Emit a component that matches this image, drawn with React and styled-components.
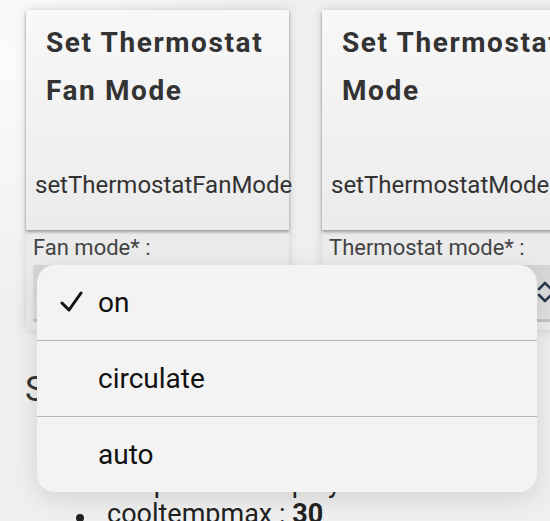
import React from 'react';
import styled, { createGlobalStyle } from 'styled-components';

const GlobalStyle = createGlobalStyle`
  body, html {
    margin: 0;
    padding: 0;
    width: 100%;
    height: 100%;
    overflow: hidden;
    background: #efefef;
    font-family: Roboto, "Liberation Sans", sans-serif;
  }
`;

const Page = styled.div`
  position: relative;
  width: 550px;
  height: 521px;
  overflow: hidden;
  background: radial-gradient(circle at 0 60px, #fbfbfb 0, #efefef 260px);
  padding: 10px 0 0 26px;
  box-sizing: border-box;
`;

const Columns = styled.div`
  display: flex;
  gap: 33px;
`;

const Column = styled.div`
  flex-shrink: 0;
  width: 263px;
  background: #ebebeb;
  box-shadow: 0 0 10px rgba(0, 0, 0, 0.13);
`;

const HeaderCard = styled.div`
  height: 220px;
  box-sizing: border-box;
  display: flex;
  flex-direction: column;
  padding: 9px 0 31px 0;
  background: linear-gradient(#f8f8f8, #ebebeb);
  box-shadow: 0 2px 3px rgba(0, 0, 0, 0.35);
  position: relative;
`;

const Title = styled.h3`
  margin: 0;
  padding-left: 20px;
  font-size: 28px;
  line-height: 48px;
  font-weight: 700;
  letter-spacing: 1.6px;
  color: #333;
  white-space: nowrap;
`;

const Command = styled.div`
  margin-top: auto;
  padding-left: 9px;
  font-size: 24px;
  color: #333;
  white-space: nowrap;
`;

const Form = styled.div`
  padding: 5px 0 8px 7px;
`;

const Label = styled.div`
  font-size: 22px;
  line-height: 26px;
  color: #444;
  margin-bottom: 4px;
  white-space: nowrap;
`;

const Select = styled.div`
  height: 57px;
  box-sizing: border-box;
  margin-right: 7px;
  background: linear-gradient(#d6d6d6, #e2e2e2);
  border-bottom: 3px solid #c4c4c4;
  display: flex;
  align-items: center;
  justify-content: flex-end;
  padding-right: 25px;
  border-radius: 3px;
`;

const Heading = styled.h2`
  margin: 39px 0 26px -1px;
  font-size: 35px;
  line-height: 42px;
  font-weight: 400;
  color: #333;
`;

const List = styled.ul`
  margin: 0;
  padding-left: 81px;
  list-style: none;
  font-size: 27px;
  line-height: 31px;
  color: #222;
`;

const Item = styled.li`
  position: relative;
  white-space: nowrap;
  &::before {
    content: '';
    position: absolute;
    left: -31px;
    top: 15px;
    width: 8px;
    height: 8px;
    border-radius: 50%;
    background: #222;
  }
`;

const Popup = styled.div`
  position: absolute;
  left: 37px;
  top: 265px;
  width: 500px;
  border-radius: 18px;
  background: #f3f3f3;
  box-shadow: 0 6px 24px rgba(0, 0, 0, 0.12);
  overflow: hidden;
`;

const Option = styled.div`
  height: 75px;
  display: flex;
  align-items: center;
  position: relative;
  padding-left: 61px;
  font-size: 28px;
  color: #111;
  & + & {
    border-top: 1px solid #b8b8b8;
  }
`;

const Check = styled.svg`
  position: absolute;
  left: 23px;
  top: 26px;
`;

const Updown = () => (
  <svg width="16" height="24" viewBox="0 0 16 24" fill="none" stroke="#2b3a55" strokeWidth="2.6" strokeLinecap="round" strokeLinejoin="round">
    <path d="M2 9 L8 3 L14 9" />
    <path d="M2 15 L8 21 L14 15" />
  </svg>
);

const options = ['on', 'circulate', 'auto'];

export default function App() {
  return (
    <>
      <GlobalStyle />
      <Page>
        <Columns>
          <Column>
            <HeaderCard>
              <Title>Set Thermostat<br />Fan Mode</Title>
              <Command>setThermostatFanMode</Command>
            </HeaderCard>
            <Form>
              <Label>Fan mode* :</Label>
              <Select />
            </Form>
          </Column>
          <Column>
            <HeaderCard>
              <Title>Set Thermostat<br />Mode</Title>
              <Command>setThermostatMode</Command>
            </HeaderCard>
            <Form>
              <Label>Thermostat mode* :</Label>
              <Select>
                <Updown />
              </Select>
            </Form>
          </Column>
        </Columns>
        <div>
          <Heading>Supported values</Heading>
          <List>
            <Item>heatingSetpoint : <b>20</b></Item>
            <Item>temperatureDisplayUnit : <b>C</b></Item>
            <Item>cooltempmax : <b>30</b></Item>
          </List>
        </div>
        <Popup>
          {options.map((o, i) => (
            <Option key={o}>
              {i === 0 && (
                <Check width="24" height="24" viewBox="0 0 24 24" fill="none" stroke="#111" strokeWidth="3" strokeLinecap="round" strokeLinejoin="round">
                  <path d="M2 12 L9 19 L21 2" />
                </Check>
              )}
              {o}
            </Option>
          ))}
        </Popup>
      </Page>
    </>
  );
}
